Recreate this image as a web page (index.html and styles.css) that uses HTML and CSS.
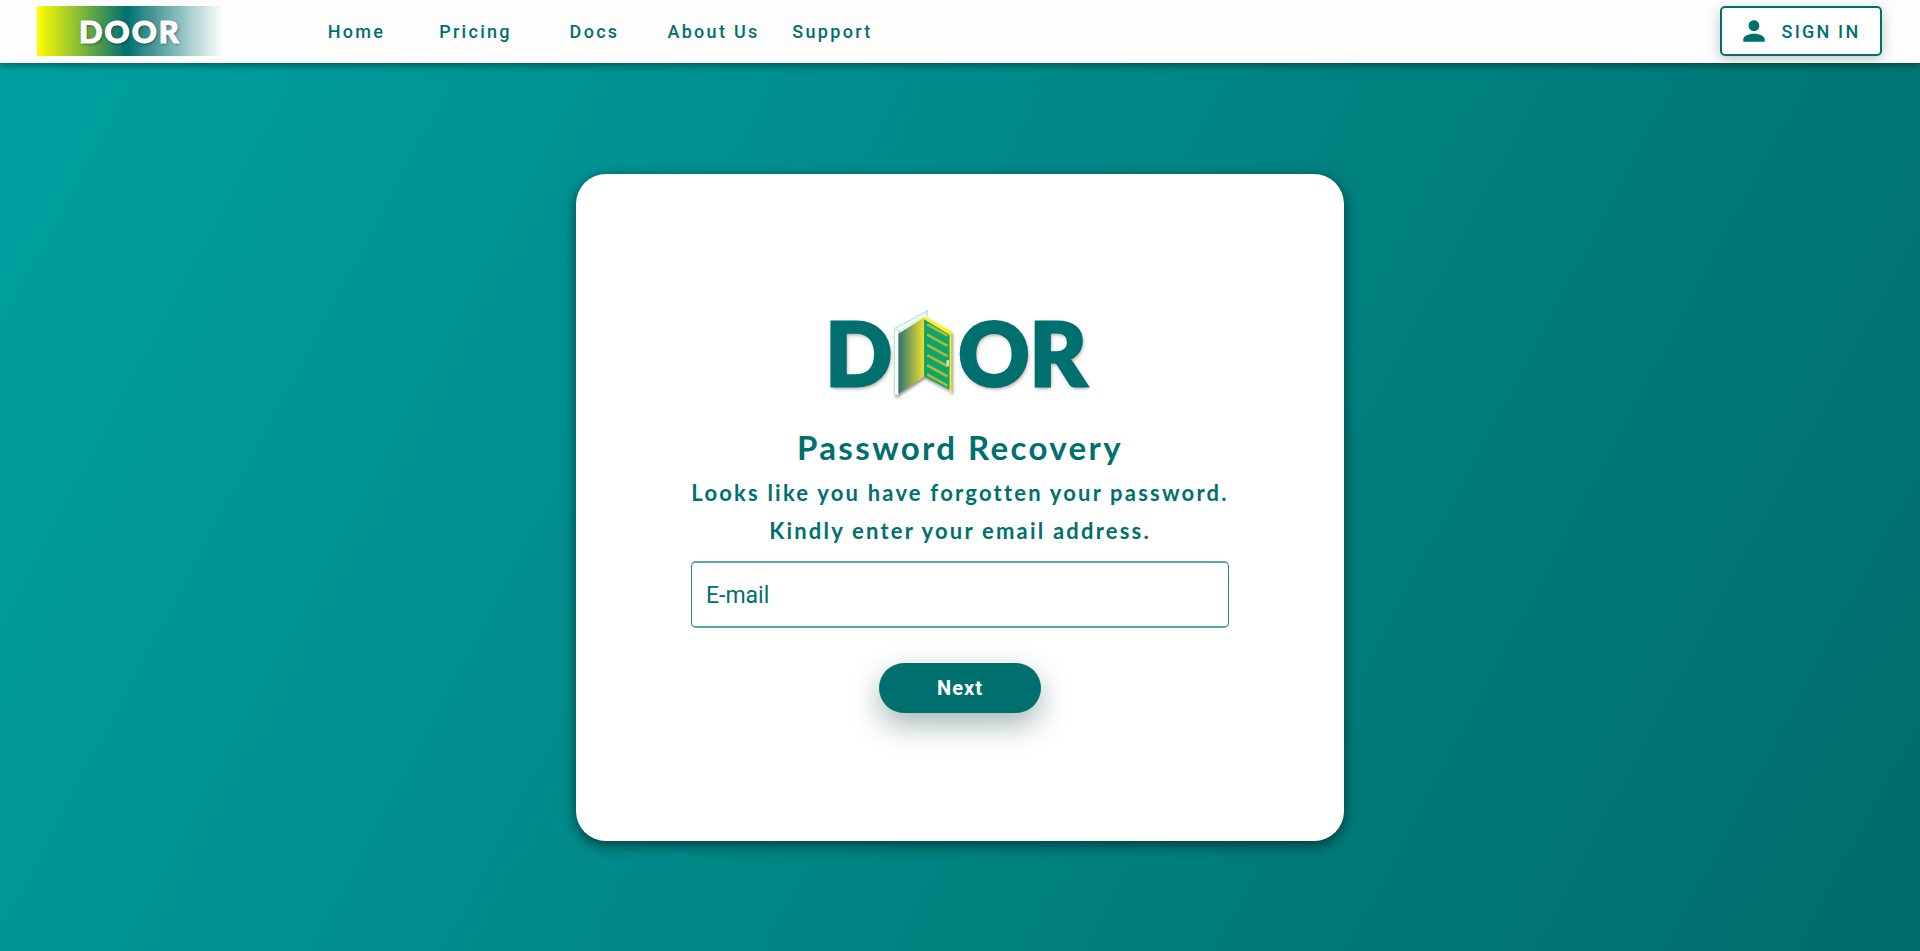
FILE: index.html
```html
<!DOCTYPE html>
<html lang="en">
<head>
<meta charset="utf-8">
<title>Door - Password Recovery</title>
<link rel="stylesheet" href="styles.css">
</head>
<body>
<header class="topbar">
  <div class="brand"><span class="brand-text">DOOR</span></div>
  <nav class="nav">
    <a class="nav-link" href="#">Home</a>
    <a class="nav-link" href="#">Pricing</a>
    <a class="nav-link" href="#">Docs</a>
    <a class="nav-link" href="#">About Us</a>
    <a class="nav-link" href="#">Support</a>
  </nav>
  <button class="signin" type="button">
    <svg class="signin-icon" viewBox="0 0 24 24" aria-hidden="true"><path d="M12 12c2.21 0 4-1.79 4-4s-1.79-4-4-4-4 1.79-4 4 1.79 4 4 4zm0 2c-2.67 0-8 1.34-8 4v2h16v-2c0-2.66-5.33-4-8-4z"/></svg>
    <span>SIGN IN</span>
  </button>
</header>
<main class="stage">
  <section class="card">
    <div class="logo">
      <span class="logo-text logo-text-start">D</span>
      <svg class="door" viewBox="0 0 80 100" aria-hidden="true">
        <defs>
          <linearGradient id="doorway" x1="0" x2="1" y1="0" y2="0">
            <stop offset="0" stop-color="#2f7470"/>
            <stop offset="1" stop-color="#f0e02c"/>
          </linearGradient>
          <filter id="doorshadow" x="-20%" y="-20%" width="140%" height="140%">
            <feDropShadow dx="1" dy="2" stdDeviation="1.6" flood-color="#3a2a2a" flood-opacity=".55"/>
          </filter>
        </defs>
        <g filter="url(#doorshadow)">
          <polygon points="13,28 17,28 17,92 13,92" fill="#fff" stroke="#8fe0c0" stroke-width=".6"/>
          <polygon points="17,32 42,16 42,74 17,91" fill="url(#doorway)"/>
          <polygon points="42,16 69,32 69,88 42,74" fill="#0aa56b"/>
          <polygon points="42,15 69,30 69,90 67,89 67,33 42,18" fill="#fff01f"/>
        </g>
        <polyline points="13,27 45,10 45,15" fill="none" stroke="#8fe0c0" stroke-width="1.6" stroke-dasharray="1 .7"/>
        <polyline points="17,30 43,14" fill="none" stroke="#8fe0c0" stroke-width=".8" stroke-dasharray="1 .7"/>
        <g stroke="#b4b53c" stroke-width="2.6">
          <line x1="45" y1="23" x2="65" y2="34"/>
          <line x1="45" y1="33" x2="65" y2="44"/>
          <line x1="45" y1="43" x2="65" y2="54"/>
          <line x1="45" y1="53" x2="65" y2="64"/>
          <line x1="45" y1="63" x2="65" y2="74"/>
          <line x1="45" y1="72" x2="65" y2="83"/>
        </g>
        <rect x="64" y="58" width="2.4" height="6" fill="#e4dcec"/>
      </svg>
      <span class="logo-text logo-text-end">OR</span>
    </div>
    <h1 class="title">Password Recovery</h1>
    <p class="lead lead-first">Looks like you have forgotten your password.</p>
    <p class="lead">Kindly enter your email address.</p>
    <input class="email" type="email" placeholder="E-mail">
    <button class="next" type="button">Next</button>
  </section>
</main>
</body>
</html>
```
FILE: styles.css
```css
* { box-sizing: border-box; }

html, body { height: 100%; }

body {
  margin: 0;
  display: flex;
  flex-direction: column;
  min-height: 951px;
  font-family: Roboto, "Liberation Sans", sans-serif;
  color: #00706f;
  background: linear-gradient(118deg, #00a1a1 0%, #006c6b 100%);
  overflow: hidden;
}

.topbar {
  position: relative;
  z-index: 2;
  flex: 0 0 63px;
  display: flex;
  align-items: center;
  padding: 0 38px 1px 37px;
  background: #fdfdfd;
  box-shadow: 0 2px 8px rgba(0, 0, 0, .45);
}

.brand {
  width: 186px;
  height: 50px;
  display: flex;
  align-items: center;
  justify-content: center;
  background: linear-gradient(90deg, #ffff00 0%, #00706f 48%, #ffffff 100%);
}

.brand-text {
  font-family: Lato, sans-serif;
  font-weight: 900;
  font-size: 31px;
  letter-spacing: 2px;
  color: #fff;
  -webkit-text-stroke: 1px #fff;
  text-shadow: 1px 1px 3px rgba(0, 0, 0, .5);
}

.nav {
  display: flex;
  margin-left: 74px;
}

.nav-link {
  width: 119px;
  text-align: center;
  font-size: 18px;
  font-weight: 500;
  letter-spacing: 2.3px;
  color: #00706f;
  text-decoration: none;
}

.signin {
  margin-left: auto;
  width: 162px;
  height: 50px;
  display: flex;
  align-items: center;
  justify-content: center;
  gap: 12px;
  padding: 0 4px 0 0;
  background: #fff;
  border: 2px solid #00706f;
  border-radius: 5px;
  color: #00706f;
  font-family: Roboto, sans-serif;
  font-size: 18px;
  font-weight: 500;
  letter-spacing: 2.2px;
  box-shadow: 0 4px 14px rgba(0, 0, 0, .22);
}

.signin-icon {
  width: 32px;
  height: 32px;
  fill: #00706f;
}

.stage {
  flex: 1;
  display: flex;
  align-items: center;
  justify-content: center;
}

.card {
  width: 768px;
  height: 667px;
  display: flex;
  flex-direction: column;
  align-items: center;
  padding-top: 128px;
  background: #fff;
  border-radius: 30px;
  box-shadow: 0 4px 14px rgba(0, 0, 0, .55);
}

.logo {
  display: flex;
  align-items: center;
  justify-content: center;
  height: 100px;
  padding-right: 8px;
}

.logo-text {
  font-family: Lato, sans-serif;
  font-weight: 900;
  font-size: 88px;
  line-height: 100px;
  color: #00706f;
  -webkit-text-stroke: 3px #00706f;
  text-shadow: 1px 2px 4px rgba(60, 30, 30, .55);
}

.logo-text-start { margin-right: -11px; }

.logo-text-end { margin-left: -5px; }

.door {
  position: relative;
  width: 82px;
  height: 102px;
  flex: none;
}

.title {
  margin: 24px 0 0;
  font-family: Lato, sans-serif;
  font-size: 33px;
  font-weight: 700;
  line-height: 42px;
  letter-spacing: 2.4px;
  color: #00706f;
}

.lead {
  margin: 0;
  font-family: Lato, sans-serif;
  font-size: 22px;
  font-weight: 700;
  line-height: 38px;
  letter-spacing: 2.2px;
  color: #00706f;
}

.lead-first { margin-top: 6px; }

.email {
  width: 538px;
  height: 67px;
  margin-top: 11px;
  padding: 3px 14px 0;
  font-family: Roboto, sans-serif;
  font-size: 23px;
  color: #00706f;
  background: #fff;
  border: 1px solid #2f8a88;
  border-width: 2px 1px;
  border-color: #5aa5a3 #2f8a88;
  border-radius: 5px;
  outline: none;
}

.email::placeholder {
  color: #00706f;
  opacity: 1;
}

.next {
  width: 162px;
  height: 50px;
  margin-top: 35px;
  padding: 0;
  background: #00706f;
  border: 0;
  border-radius: 25px;
  color: #fff;
  font-family: Roboto, sans-serif;
  font-size: 20px;
  font-weight: 700;
  letter-spacing: 1px;
  box-shadow: 0 12px 30px rgba(0, 50, 50, .35);
}
```
